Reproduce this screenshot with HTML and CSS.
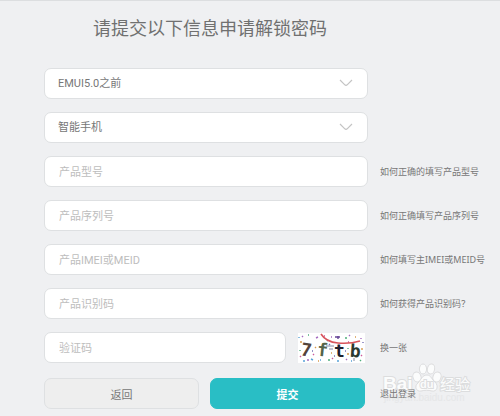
FILE: index.html
```html
<!DOCTYPE html>
<html lang="zh-CN">

<head>
    <meta charset="utf-8">
    <meta name="viewport" content="width=device-width, initial-scale=1.0">
    <title>申请解锁密码</title>
    <link rel="stylesheet" href="styles.css">
</head>

<body>
    <h1 class="title">请提交以下信息申请解锁密码</h1>

    <form class="unlock" action="#" method="post">
        <div class="row">
            <div class="select">
                <select name="emui" aria-label="EMUI版本">
                    <option selected>EMUI5.0之前</option>
                    <option>EMUI5.0及之后</option>
                </select>
                <svg class="arrow" viewBox="0 0 14 8"><path d="M1 1 L5.6 5.6 Q7 7 8.4 5.6 L13 1"/></svg>
            </div>
        </div>
        <div class="row">
            <div class="select">
                <select name="type" aria-label="产品类型">
                    <option selected>智能手机</option>
                    <option>平板</option>
                </select>
                <svg class="arrow" viewBox="0 0 14 8"><path d="M1 1 L5.6 5.6 Q7 7 8.4 5.6 L13 1"/></svg>
            </div>
        </div>
        <div class="row">
            <input type="text" name="model" placeholder="产品型号" aria-label="产品型号">
            <a href="#">如何正确的填写产品型号</a>
        </div>
        <div class="row">
            <input type="text" name="serial" placeholder="产品序列号" aria-label="产品序列号">
            <a href="#">如何正确填写产品序列号</a>
        </div>
        <div class="row">
            <input type="text" name="imei" placeholder="产品IMEI或MEID" aria-label="产品IMEI或MEID">
            <a href="#">如何填写主IMEI或MEID号</a>
        </div>
        <div class="row">
            <input type="text" name="pid" placeholder="产品识别码" aria-label="产品识别码">
            <a href="#">如何获得产品识别码？</a>
        </div>
        <div class="row">
            <div class="verify">
                <input type="text" name="code" placeholder="验证码" aria-label="验证码">
                <svg class="code" viewBox="0 0 67 30" role="img" aria-label="验证码图片">
                    <rect width="67" height="30" fill="#fff"/>
                    <g fill="none" stroke-width="1.4">
                        <path d="M4 3 l1 1 M18 5 l2 -1 M33 4 h1 M51 2 l1 1 M63 5 v1 M9 27 h2 M48 26 l1 1" stroke="#a66cc0"/>
                        <path d="M10 2 h1 M29 7 l1 1 M47 5 h2 M2 17 v1 M30 27 h2 M62 28 l1 -1 M50 15 v1" stroke="#4fae7c"/>
                        <path d="M2 9 h2 M17 14 l1 1 M33 20 h1 M49 21 h2 M64 15 v2 M20 28 h1 M57 4 h1" stroke="#d69a4e"/>
                        <path d="M5 28 h2 M13 26 l2 1 M22 27 h1 M39 28 h2 M53 28 h1 M1 4 v1" stroke="#58a3d8"/>
                        <path d="M2 23 l1 1 M15 22 l1 -1 M34 25 l1 1 M50 9 h1 M64 22 l-1 1 M44 22 v1 M26 3 h1" stroke="#cc5a9c"/>
                        <path d="M14 18 h1 M31 12 l1 -1 M36 23 h1 M47 18 h1 M65 9 v1 M7 22 h1" stroke="#7670b5"/>
                    </g>
                    <path d="M37 4 h5 M40 3 v3" stroke="#654596" stroke-width="1.4"/>
                    <g class="glyphs">
                        <text x="3" y="23" transform="rotate(9 8 17)" fill="#55443a">7</text>
                        <text x="19" y="23" transform="rotate(6 24 17)" fill="#55644a">f</text>
                        <text x="36" y="24" fill="#20202c">t</text>
                        <text x="52" y="24" transform="rotate(4 57 18)" fill="#2c3a30">b</text>
                    </g>
                    <path d="M23 1 Q28 9 40 10 T62 8" fill="none" stroke="#d8555b" stroke-width="1.6"/>
                    <path d="M28 13 H36 M31 16 H35 M56 25 V28" stroke="#858aa1"/>
                </svg>
            </div>
            <a href="#">换一张</a>
        </div>
        <div class="row last">
            <div class="buttons">
                <button type="button" class="back">返回</button>
                <button type="submit" class="submit">提交</button>
            </div>
            <div class="logout">
                <svg class="watermark" viewBox="0 0 92 42" aria-hidden="true">
                    <text class="logo" x="1" y="27">Bai</text>
                    <g fill="#fff" stroke="#d8d9da">
                        <ellipse cx="35" cy="14" rx="4" ry="5" transform="rotate(-20 35 14)"/>
                        <ellipse cx="41" cy="6" rx="3.6" ry="5"/>
                        <ellipse cx="49" cy="6" rx="3.6" ry="5" transform="rotate(12 49 6)"/>
                        <ellipse cx="55" cy="14" rx="4" ry="5" transform="rotate(20 55 14)"/>
                        <path d="M45 12 C49 12 50 17 53 19 C57 23 55 29 50 28 C46 27 43 27 39 28 C34 29 32 23 36 20 C39 17 40 12 45 12 Z"/>
                    </g>
                    <text class="du" x="38" y="25">du</text>
                    <text class="jingyan" x="58" y="27">经验</text>
                    <text class="site" x="2" y="38">jingyan.baidu.com</text>
                </svg>
                <a href="#">退出登录</a>
            </div>
        </div>
    </form>
</body>

</html>
```

FILE: styles.css
```css
* {
    box-sizing: border-box;
}

body {
    margin: 0;
    border-top: 1px solid #dcdee0;
    background: #eff0f2;
    color: #777;
    font-family: Roboto, "Noto Sans CJK SC", sans-serif;
    font-size: 11px;
}

.title {
    margin: 0;
    padding: 14px 80px 0 0;
    color: #707070;
    font-size: 18px;
    font-weight: 400;
    line-height: 28px;
    text-align: center;
}

.unlock {
    display: flex;
    flex-direction: column;
    gap: 13px;
    padding: 25px 0 6px 44px;
}

.row {
    display: grid;
    grid-template-columns: 27fr 10fr;
    column-gap: 12px;
    align-items: center;
}

.row.last {
    margin-top: 2px;
}

input,
select,
button {
    height: 31px;
    border: 1px solid #dee0e2;
    border-radius: 7px;
    font-family: inherit;
    font-size: 11px;
}

input,
select {
    width: 100%;
    min-width: 0;
    padding: 1px 14px 0;
    background: #fff;
    color: #777;
}

input::placeholder {
    color: #bdbdbd;
    opacity: 1;
}

select {
    padding: 0 13px;
    appearance: none;
}

.select {
    position: relative;
}

.arrow {
    position: absolute;
    top: 11px;
    right: 15px;
    width: 14px;
    height: 8px;
    fill: none;
    stroke: #c4c4c4;
    stroke-width: 1.2;
    pointer-events: none;
}

a {
    color: #777;
    font-family: "Noto Sans", "Noto Sans CJK SC", sans-serif;
    font-size: 9px;
    text-decoration: none;
    white-space: nowrap;
}

.verify {
    display: flex;
    align-items: center;
    gap: 12px;
    padding-right: 3px;
}

.verify input {
    flex: 1;
}

.code {
    flex: none;
    width: 67px;
    height: 30px;
}

.glyphs {
    font-family: "DejaVu Sans Mono", monospace;
    font-size: 18px;
    font-weight: 700;
}

.buttons {
    display: flex;
    gap: 11px;
    padding-right: 3px;
}

.buttons button {
    flex: 1;
}

.back {
    background: #eee;
    color: #777;
}

.submit {
    border-color: #29bec5;
    background: #29bec5;
    color: #fff;
    font-weight: 700;
}

.logout {
    position: relative;
}

.logout a {
    position: relative;
}

/* site mark shares the corner with the logout link */
.watermark {
    position: absolute;
    top: -24px;
    left: 2px;
    width: 92px;
    height: 42px;
    opacity: 0.8;
    pointer-events: none;
}

.watermark text {
    fill: #fff;
    stroke: #d8d9da;
    stroke-width: 2px;
    paint-order: stroke;
    font-family: "Liberation Sans", "Noto Sans CJK SC", sans-serif;
}

.watermark .logo {
    font-size: 19px;
    font-weight: 700;
}

.watermark .du {
    font-size: 11px;
    font-weight: 700;
}

.watermark .jingyan {
    font-size: 15px;
}

.watermark .site {
    font-size: 10px;
    fill: #e4e5e6;
    stroke: none;
}
```
